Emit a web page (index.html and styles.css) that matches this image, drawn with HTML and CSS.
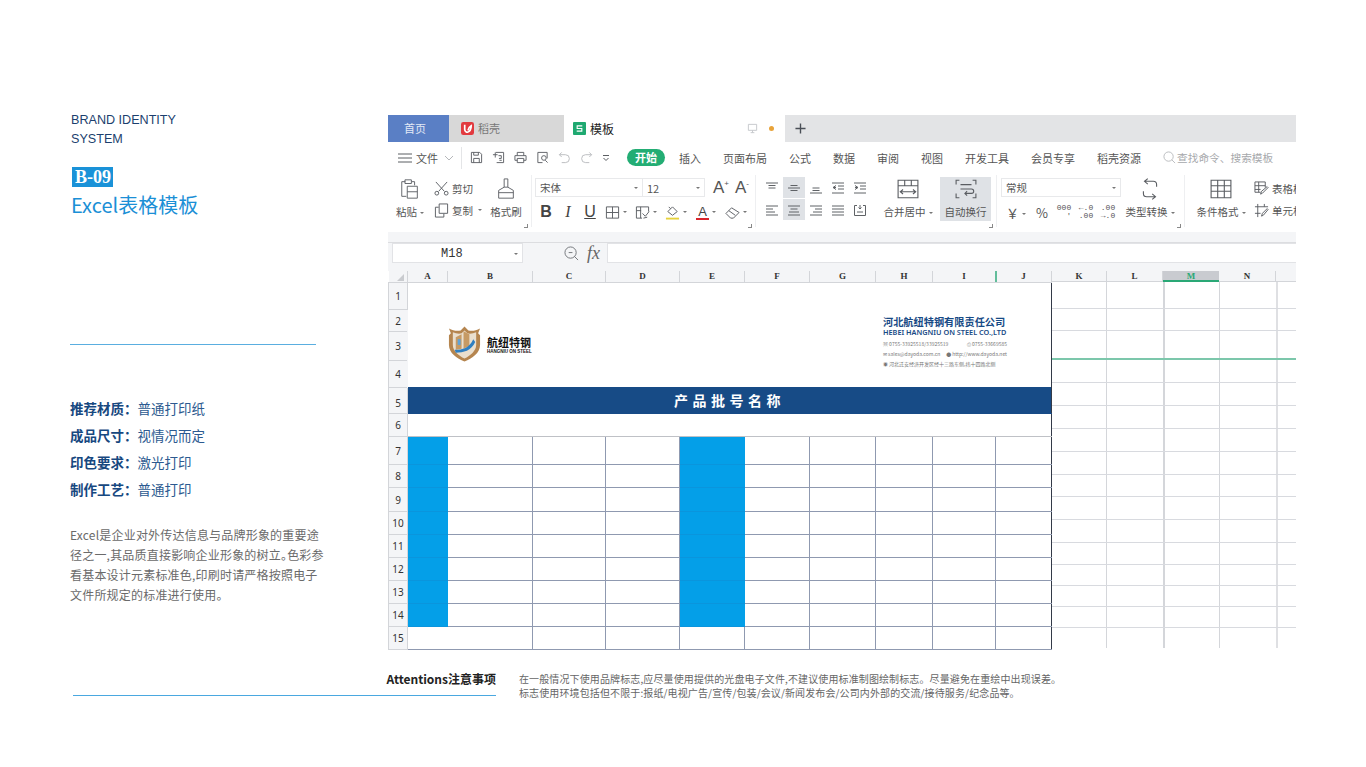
FILE: index.html
```html
<!DOCTYPE html>
<html lang="zh-CN">
<head>
    <meta charset="UTF-8">
    <meta name="viewport" content="width=device-width, initial-scale=1.0">
    <title>Excel表格模板</title>
    <link rel="stylesheet" href="styles.css">
</head>
<body>
    <div class="page">
        <div class="top">
            <aside class="side">
                <div class="brand">BRAND IDENTITY<br>SYSTEM</div>
                <div class="badge"><span>B-09</span></div>
                <h1 class="side-title">Excel表格模板</h1>
                <div class="side-rule"></div>
                <ul class="specs">
                    <li><b>推荐材质：</b>普通打印纸</li>
                    <li><b>成品尺寸：</b>视情况而定</li>
                    <li><b>印色要求：</b>激光打印</li>
                    <li><b>制作工艺：</b>普通打印</li>
                </ul>
                <p class="side-text">Excel是企业对外传达信息与品牌形象的重要途径之一,其品质直接影响企业形象的树立。色彩参看基本设计元素标准色,印刷时请严格按照电子文件所规定的标准进行使用。</p>
            </aside>

            <main class="app">
                <div class="tabs">
                    <div class="tab tab-home">首页</div>
                    <div class="tab tab-doc">
                        <svg class="tab-icon" viewBox="0 0 14 14"><rect width="14" height="14" rx="2.5" fill="#e23a3f"/><path d="M4 3v5c0 2 2 3 3 3 3-1 4-4 4-7-2 1-3 3-3.500 5" fill="none" stroke="#fff" stroke-width="1.800"/></svg>
                        稻壳
                    </div>
                    <div class="tab tab-active">
                        <svg class="tab-icon" viewBox="0 0 14 14"><rect width="14" height="14" rx="1" fill="#1fa971"/><path d="M10 4.200H4.500v2.800h5v2.800H4" fill="none" stroke="#fff" stroke-width="1.200"/></svg>
                        模板
                        <svg class="monitor" viewBox="0 0 12 12"><path d="M1.500 1.500h9v6.500h-9zM6 8v2.500M4 10.500h4" fill="none" stroke="#c4c6ca"/></svg>
                        <span class="dot"></span>
                    </div>
                    <div class="tab-rest">
                        <svg class="plus" viewBox="0 0 12 12"><path d="M6 .5v11M.5 6h11" stroke="#4a4f57" stroke-width="1.500"/></svg>
                    </div>
                </div>

                <div class="menu">
                    <svg class="mi hamburger" viewBox="0 0 14 10"><path d="M0 1h14M0 5h14M0 9h14"/></svg>
                    <span class="file-menu">文件</span>
                    <svg class="mi chev" viewBox="0 0 10 6"><path d="M1 1l4 4 4-4"/></svg>
                    <span class="menu-sep"></span>
                    <div class="quick">
                        <svg class="mi" viewBox="0 0 14 14"><path d="M1.500 1.500h9l2 2v9h-11zM4 12.500V8h6v4.500M4 1.500v3h5v-3"/></svg>
                        <svg class="mi" viewBox="0 0 14 14"><path d="M4 1.500h8.500v11H5M1 4h5M3.500 1.500V7M7 5h3v3H7.500M8 10h2.500"/></svg>
                        <svg class="mi" viewBox="0 0 14 14"><path d="M3.500 5V1.500h7V5M3.500 10H1V5h12v5h-2.500M3.500 8h7v4.500h-7z"/></svg>
                        <svg class="mi" viewBox="0 0 14 14"><path d="M12 8V1.500H2v11h5M6 7.500a2.500 2.500 0 1 0 5 0 2.500 2.500 0 1 0-5 0M10 10l2.500 2.500"/></svg>
                        <svg class="mi faded" viewBox="0 0 14 14"><path d="M4 1.500L1.500 4 4 6.500M1.500 4H8a4 4 0 0 1 0 8.500H4"/></svg>
                        <svg class="mi faded" viewBox="0 0 14 14"><path d="M10 1.500L12.500 4 10 6.500M12.500 4H6a4 4 0 0 0 0 8.500h4"/></svg>
                        <svg class="mi small" viewBox="0 0 8 8"><path d="M1 1.500h6M1.500 4L4 6.500 6.500 4"/></svg>
                    </div>
                    <span class="pill">开始</span>
                    <nav class="menu-items">
                        <span>插入</span><span>页面布局</span><span>公式</span><span>数据</span><span>审阅</span><span>视图</span><span>开发工具</span><span>会员专享</span><span>稻壳资源</span>
                    </nav>
                    <div class="search">
                        <svg class="mi faded" viewBox="0 0 14 14"><path d="M1 6a5 5 0 1 0 10 0 5 5 0 1 0-10 0M9.500 9.500L13 13"/></svg>
                        查找命令、搜索模板
                    </div>
                </div>

                <div class="ribbon">
                    <section class="group group-clip">
                        <div class="big paste">
                            <svg class="ic-big" viewBox="0 0 22 24"><path d="M6 4H2v16h5M5.500 2h7v4h-7zM13 4h3v4M8 9h11v13H8zM8 15h11"/></svg>
                            <span class="lbl">粘贴<i class="caret"></i></span>
                        </div>
                        <div class="pair">
                            <div class="line"><svg class="ic" viewBox="0 0 16 16"><path d="M2 1l9 10M14 1L5 11M1 13a2 2 0 1 0 4 0 2 2 0 1 0-4 0M11 13a2 2 0 1 0 4 0 2 2 0 1 0-4 0"/></svg>剪切</div>
                            <div class="line"><svg class="ic" viewBox="0 0 16 16"><path d="M5.500 1h9v10h-9zM5 4.500H1.500V15h9v-3.500"/></svg>复制<i class="caret"></i></div>
                        </div>
                        <div class="big brush">
                            <svg class="ic-big" viewBox="0 0 20 24"><path d="M8 1h4v9H8zM8 10L2 13.500V22h16v-8.500L12 10M2 16h16"/></svg>
                            <span class="lbl">格式刷</span>
                        </div>
                        <i class="launch"></i>
                    </section>

                    <section class="group group-font">
                        <div class="row-one">
                            <div class="select font-name">宋体<i class="caret"></i></div>
                            <div class="select font-size">12<i class="caret"></i></div>
                            <span class="grow-font">A<sup>+</sup></span>
                            <span class="grow-font">A<sup>-</sup></span>
                        </div>
                        <div class="row-two">
                            <span class="t22 glyph bold">B</span>
                            <span class="t22 glyph ital">I</span>
                            <span class="t22 glyph under">U</span>
                            <span class="t30"><svg class="ic" viewBox="0 0 16 16"><path d="M1.500 2h13v12h-13zM8 2v12M1.500 8h13"/></svg><i class="caret"></i></span>
                            <span class="t30"><svg class="ic" viewBox="0 0 16 16"><path d="M1.500 2h13v5M1.500 2v12h6M1.500 6h5M6 2v12M8 9l3 3 4-5M9 14l4-1"/></svg><i class="caret"></i></span>
                            <span class="t30"><svg class="ic" viewBox="0 0 16 16"><path d="M3 7l5-5 5 5-5 4zM6 4l-2-2"/><path class="bar-yellow" d="M1 14.500h14"/></svg><i class="caret"></i></span>
                            <span class="t30"><span class="glyph-a">A</span><i class="caret"></i></span>
                            <span class="t30"><svg class="ic" viewBox="0 0 16 16"><path d="M1 9l6-6 8 5-6 6H6zM4 6l7 5"/></svg><i class="caret"></i></span>
                        </div>
                        <i class="launch"></i>
                    </section>

                    <section class="group group-align">
                        <div class="align-grid">
                            <span class="al"><svg class="ic-sm" viewBox="0 0 12 12"><path d="M0 1h12M2.500 3.500h7M2.500 6h7"/></svg></span>
                            <span class="al on"><svg class="ic-sm" viewBox="0 0 12 12"><path d="M2.500 3.500h7M0 6h12M2.500 8.500h7"/></svg></span>
                            <span class="al"><svg class="ic-sm" viewBox="0 0 12 12"><path d="M2.500 6h7M2.500 8.500h7M0 11h12"/></svg></span>
                            <span class="al"><svg class="ic-sm" viewBox="0 0 12 12"><path d="M0 1h12M6 4h6M6 7h6M0 11h12M4 3.500L1 5.500l3 2M1 5.500h3"/></svg></span>
                            <span class="al"><svg class="ic-sm" viewBox="0 0 12 12"><path d="M0 1h12M6 4h6M6 7h6M0 11h12M1 3.500l3 2-3 2M1 5.500h3"/></svg></span>
                            <span class="al"><svg class="ic-sm" viewBox="0 0 12 12"><path d="M0 2h12M0 5h7M0 8h9M0 11h12"/></svg></span>
                            <span class="al on"><svg class="ic-sm" viewBox="0 0 12 12"><path d="M0 2h12M2.500 5h7M1 8h10M0 11h12"/></svg></span>
                            <span class="al"><svg class="ic-sm" viewBox="0 0 12 12"><path d="M0 2h12M5 5h7M3 8h9M0 11h12"/></svg></span>
                            <span class="al"><svg class="ic-sm" viewBox="0 0 12 12"><path d="M0 2h12M0 5h12M0 8h12M0 11h12"/></svg></span>
                            <span class="al"><svg class="ic-sm" viewBox="0 0 12 12"><path d="M.5 1.500v10h11v-10M.5 1.500h2.500M9 1.500h2.500M6 1v4M4.500 3.500L6 5l1.500-1.500M3 8h6"/></svg></span>
                        </div>
                        <div class="big merge">
                            <svg class="ic-big" viewBox="0 0 20 18"><path d="M1 1h18v16H1zM1 6h18M7 1v5M13 1v5M3 11.500h14M5.500 9.500L3 11.500l2.500 2M14.500 9.500l2.500 2-2.500 2"/></svg>
                            <span class="lbl">合并居中<i class="caret"></i></span>
                        </div>
                        <div class="big wrap on">
                            <svg class="ic-big" viewBox="0 0 20 18"><path d="M4 1H1v4M16 1h3v4M4 17H1v-4M16 17h3v-4M5 5h10M5 9h10a2 2 0 0 1 0 4H9M11 11l-2 2 2 2"/></svg>
                            <span class="lbl">自动换行</span>
                        </div>
                        <i class="launch"></i>
                    </section>

                    <section class="group group-num">
                        <div class="num-fields">
                            <div class="select num-type">常规<i class="caret"></i></div>
                            <div class="row-two num-row">
                                <span class="yen">￥<i class="caret"></i></span>
                                <span class="numsym pct">%</span>
                                <span class="numsym stack">000<br>&nbsp;&nbsp;'</span>
                                <span class="numsym stack">←.0<br>.00</span>
                                <span class="numsym stack">.00<br>→.0</span>
                            </div>
                        </div>
                        <div class="big convert">
                            <svg class="ic-big" viewBox="0 0 16 20"><path d="M3 3h8c2 0 3 1 3 3v2M6 .5L3 3l3 2.500M13 17H5c-2 0-3-1-3-3v-2M10 14.500l3 2.500-3 2.500"/></svg>
                            <span class="lbl">类型转换<i class="caret"></i></span>
                        </div>
                        <i class="launch"></i>
                    </section>

                    <section class="group group-style">
                        <div class="big cond">
                            <svg class="ic-big" viewBox="0 0 20 18"><path d="M1 1h18v16H1zM1 6h18M1 11h18M7 1v16M13 1v16"/></svg>
                            <span class="lbl">条件格式<i class="caret"></i></span>
                        </div>
                        <div class="pair pair-clip">
                            <div class="line"><svg class="ic" viewBox="0 0 16 16"><path d="M1 1h11v6M1 1v11h6M1 5h11M1 9h6M5 1v11M7 14l1-3 6-5 1 1-6 6z"/></svg>表格样式</div>
                            <div class="line"><svg class="ic" viewBox="0 0 16 16"><path d="M1 4h14M1 11h6M4 1v14M11 1v3M8 14l1-3 5-5 1 1-5 6z"/></svg>单元格样式</div>
                        </div>
                    </section>
                </div>

                <div class="formula-strip"></div>
                <div class="formula">
                    <div class="name-box">M18<i class="caret"></i></div>
                    <svg class="zoom-ic" viewBox="0 0 16 16"><path d="M1 7a6 6 0 1 0 12 0 6 6 0 1 0-12 0M11 11l4 4M5 7h4"/></svg>
                    <span class="fx">fx</span>
                    <div class="formula-input"></div>
                </div>

                <div class="sheet-wrap">
                    <table class="sheet">
                        <colgroup>
                            <col class="c-head"><col class="c-a"><col class="c-b"><col class="c-c"><col class="c-d"><col class="c-e"><col class="c-f"><col class="c-g"><col class="c-h"><col class="c-i"><col class="c-j">
                        </colgroup>
                        <tr class="r-cols"><th class="corner"></th><th>A</th><th>B</th><th>C</th><th>D</th><th>E</th><th>F</th><th>G</th><th>H</th><th>I</th><th>J</th></tr>
                        <tr class="r1">
                            <th>1</th>
                            <td colspan="10" rowspan="4" class="letterhead-cell">
                                <div class="letterhead">
                                    <div class="logo">
                                        <svg class="shield" viewBox="0 0 36 38">
                                            <path d="M18 1l4 4c4 1 8 0 12-2l-2 5 2 2v10c0 8-8 14-16 17C10 34 2 28 2 20V10l2-2-2-5c4 2 8 3 12 2z" fill="#b5854f"/>
                                            <path d="M18 5l3 3c3 1 6 0 9-1v13c0 6-6 11-12 14C12 31 6 26 6 20V7c3 1 6 2 9 1z" fill="#eadfce"/>
                                            <path d="M9 12l6-3v15l-6 1zM17 6l6 3v12l-6 3z" fill="#c69a64"/>
                                            <path d="M8 25c8 0 15-2 19-11l2 3c-4 9-12 11-20 11z" fill="#2f7fc1"/>
                                            <path d="M11 14h3v6h-3z" fill="#5fa3d8"/>
                                        </svg>
                                        <div class="logo-text"><strong>航纽特钢</strong><span>HANGNIU ON STEEL</span></div>
                                    </div>
                                    <div class="company">
                                        <strong>河北航纽特钢有限责任公司</strong>
                                        <em>HEBEI HANGNIU ON STEEL CO.,LTD</em>
                                        <p class="contact-pair"><span>☏ 0755-33925518/33925519</span><span>⎙ 0755-33669585</span></p>
                                        <p class="contact-pair"><span>✉ sales@dayoda.com.cn</span><span>● http://www.dayoda.net</span></p>
                                        <p>◉ 河北迁安经济开发区经十三路东侧,纬十四路北侧</p>
                                    </div>
                                </div>
                            </td>
                        </tr>
                        <tr class="r2"><th>2</th></tr>
                        <tr class="r3"><th>3</th></tr>
                        <tr class="r4"><th>4</th></tr>
                        <tr class="r5"><th>5</th><td colspan="10" class="band">产品批号名称</td></tr>
                        <tr class="r6"><th>6</th><td colspan="10" class="blank"></td></tr>
                        <tr class="r7"><th>7</th><td class="blue"></td><td></td><td></td><td></td><td class="blue"></td><td></td><td></td><td></td><td></td><td></td></tr>
                        <tr class="r8"><th>8</th><td class="blue"></td><td></td><td></td><td></td><td class="blue"></td><td></td><td></td><td></td><td></td><td></td></tr>
                        <tr class="r9"><th>9</th><td class="blue"></td><td></td><td></td><td></td><td class="blue"></td><td></td><td></td><td></td><td></td><td></td></tr>
                        <tr class="r10"><th>10</th><td class="blue"></td><td></td><td></td><td></td><td class="blue"></td><td></td><td></td><td></td><td></td><td></td></tr>
                        <tr class="r11"><th>11</th><td class="blue"></td><td></td><td></td><td></td><td class="blue"></td><td></td><td></td><td></td><td></td><td></td></tr>
                        <tr class="r12"><th>12</th><td class="blue"></td><td></td><td></td><td></td><td class="blue"></td><td></td><td></td><td></td><td></td><td></td></tr>
                        <tr class="r13"><th>13</th><td class="blue"></td><td></td><td></td><td></td><td class="blue"></td><td></td><td></td><td></td><td></td><td></td></tr>
                        <tr class="r14"><th>14</th><td class="blue"></td><td></td><td></td><td></td><td class="blue"></td><td></td><td></td><td></td><td></td><td></td></tr>
                        <tr class="r15"><th>15</th><td colspan="2"></td><td></td><td></td><td></td><td></td><td></td><td></td><td></td><td></td></tr>
                    </table>

                    <div class="extra">
                        <div class="extra-cols"><span class="x-k">K</span><span class="x-l">L</span><span class="x-m">M</span><span class="x-n">N</span><span class="x-o"></span></div>
                        <div class="extra-rows">
                            <div class="x1"></div><div class="x2"></div><div class="x3"></div>
                            <div class="x5"></div><div class="x5"></div><div class="x5"></div><div class="x5"></div><div class="x5"></div>
                            <div class="x2"></div><div class="x5"></div><div class="x5"></div><div class="x2"></div>
                            <div class="x6"></div><div class="x6"></div><div class="x6"></div><div class="x7"></div>
                        </div>
                    </div>
                    <i class="j-mark"></i>
                </div>
            </main>
        </div>

        <footer class="foot">
            <div class="foot-title">Attentions注意事项</div>
            <div class="foot-text">
                在一般情况下使用品牌标志,应尽量使用提供的光盘电子文件,不建议使用标准制图绘制标志。尽量避免在重绘中出现误差。<br>
                标志使用环境包括但不限于:报纸/电视广告/宣传/包装/会议/新闻发布会/公司内外部的交流/接待服务/纪念品等。
            </div>
        </footer>
    </div>
</body>
</html>
```
FILE: styles.css
```css
* {
    box-sizing: border-box;
}
body {
    margin: 0;
    width: 1366px;
    height: 767px;
    overflow: hidden;
    background-color: #ffffff;
    font-family: "Noto Sans CJK SC", "Noto Sans", sans-serif;
    color: #444;
}
.page {
    padding-top: 110px;
}
.top {
    display: flex;
    padding-left: 70px;
}

/* left column */
.side {
    width: 318px;
    flex: none;
}
.brand {
    margin-top: 1px;
    padding-left: 1px;
    font-family: "Liberation Sans", Arial, sans-serif;
    font-size: 12.600px;
    line-height: 19px;
    color: #1c3f6e;
}
.badge {
    width: 41px;
    height: 20px;
    margin: 18px 0 0 2px;
    background-color: #1a92d8;
    color: #fff;
    font-family: "Liberation Serif", serif;
    font-weight: bold;
    font-size: 19px;
    line-height: 20px;
    text-align: center;
    overflow: hidden;
}
.badge span {
    display: inline-block;
    transform: scaleX(.95);
}
.side-title {
    margin: 3px 0 0 1px;
    font-size: 20px;
    font-weight: normal;
    line-height: 30px;
    color: #1b8fd6;
}
.side-rule {
    width: 246px;
    height: 1px;
    margin-top: 124px;
    background-color: #5aaee0;
}
.specs {
    list-style: none;
    margin: 50px 0 0;
    padding: 0;
    font-size: 13.500px;
    line-height: 27px;
    color: #2c5a90;
}
.specs b {
    color: #174880;
}
.side-text {
    width: 256px;
    margin: 22px 0 0;
    font-size: 12px;
    line-height: 20px;
    letter-spacing: .2px;
    font-feature-settings: "palt";
    color: #6a6a6a;
}

/* spreadsheet window */
.app {
    width: 908px;
    margin-top: 5px;
    flex: none;
    overflow: hidden;
    font-size: 10.500px;
    color: #555;
}
.tabs {
    display: flex;
    height: 27px;
    font-size: 11px;
    line-height: 27px;
}
.tab {
    display: flex;
    align-items: center;
}
.tab-home {
    width: 61px;
    padding-left: 16px;
    background-color: #5a7fc5;
    color: #e3e9f6;
}
.tab-doc {
    width: 115px;
    padding-left: 12px;
    background-color: #d8d8d8;
    color: #777;
}
.tab-active {
    width: 221px;
    padding-left: 9px;
    font-size: 12px;
    color: #222;
}
.tab-icon {
    width: 13px;
    height: 13px;
    margin-right: 4px;
}
.monitor {
    width: 11px;
    height: 11px;
    margin-left: 133px;
}
.dot {
    width: 5px;
    height: 5px;
    margin-left: 11px;
    border-radius: 50%;
    background-color: #e8a33a;
}
.tab-rest {
    flex: 1;
    display: flex;
    align-items: center;
    padding-left: 10px;
    background-color: #e3e4e6;
}
.plus {
    width: 11px;
    height: 11px;
}

.menu {
    display: flex;
    align-items: center;
    height: 31px;
    padding-left: 10px;
    font-size: 11px;
}
.mi {
    width: 13px;
    height: 13px;
    fill: none;
    stroke: #5b5e63;
    stroke-width: 1;
}
.mi.faded {
    stroke: #b8babd;
}
.mi.small {
    width: 8px;
    height: 8px;
}
.hamburger {
    width: 14px;
    height: 10px;
}
.file-menu {
    margin-left: 4px;
}
.chev {
    width: 10px;
    height: 6px;
    margin-left: 6px;
    stroke: #b5b7ba;
}
.menu-sep {
    width: 1px;
    height: 22px;
    margin: 0 8px 0 7px;
    background-color: #e4e5e7;
}
.quick {
    display: flex;
    align-items: center;
    gap: 9px;
}
.pill {
    width: 38px;
    height: 17px;
    margin-left: 17px;
    border-radius: 9px;
    background-color: #23ad74;
    color: #fff;
    font-weight: bold;
    line-height: 17px;
    text-align: center;
}
.menu-items {
    display: flex;
    gap: 22px;
    margin-left: 14px;
}
.search {
    display: flex;
    align-items: center;
    gap: 1px;
    margin-left: 22px;
    font-size: 10.700px;
    color: #a6a8ab;
    white-space: nowrap;
}

.ribbon {
    display: flex;
    height: 59px;
    overflow: hidden;
    background-color: #fff;
}
.group {
    position: relative;
    display: flex;
    flex: none;
    height: 59px;
}
.group + .group::before {
    content: "";
    position: absolute;
    left: -2px;
    top: 2px;
    height: 52px;
    width: 1px;
    background-color: #eeeff1;
}
.launch {
    position: absolute;
    right: 5px;
    bottom: 4px;
    width: 4px;
    height: 4px;
    border-right: 1px solid #888;
    border-bottom: 1px solid #888;
}
.big {
    display: flex;
    flex-direction: column;
    align-items: center;
    justify-content: space-between;
    height: 44px;
    margin-top: 4px;
    padding: 1px 0 2px;
}
.big.on {
    background-color: #dfe2e6;
}
.lbl {
    white-space: nowrap;
    line-height: 14px;
}
.ic-big {
    width: 22px;
    height: 22px;
    fill: none;
    stroke: #5a5d62;
    stroke-width: 1;
}
.ic {
    width: 15px;
    height: 15px;
    flex: none;
    fill: none;
    stroke: #5a5d62;
    stroke-width: 1;
}
.ic-sm {
    width: 12px;
    height: 12px;
    fill: none;
    stroke: #5f6266;
    stroke-width: 1;
}
.caret {
    display: inline-block;
    width: 0;
    height: 0;
    margin-left: 3px;
    vertical-align: middle;
    border-left: 2px solid transparent;
    border-right: 2px solid transparent;
    border-top: 2px solid #777;
}

.group-clip {
    width: 145px;
}
.paste {
    width: 38px;
    margin-left: 3px;
}
.pair {
    margin: 4px 0 0 5px;
    width: 48px;
}
.line {
    display: flex;
    align-items: center;
    gap: 3px;
    height: 22px;
    white-space: nowrap;
}
.line .caret {
    margin-left: 2px;
}
.brush {
    width: 36px;
    margin-left: 6px;
}

.group-font {
    flex-direction: column;
    width: 224px;
    padding: 5px 0 0 2px;
}
.row-one {
    display: flex;
    align-items: center;
    height: 19px;
}
.select {
    display: flex;
    align-items: center;
    justify-content: space-between;
    height: 19px;
    padding: 0 4px;
    border: 1px solid #e8e9eb;
}
.font-name {
    width: 108px;
}
.font-size {
    width: 63px;
    margin-left: -1px;
    font-size: 11px;
}
.grow-font {
    width: 20px;
    margin-left: 1px;
    font-family: "Liberation Sans", sans-serif;
    font-size: 17px;
    line-height: 19px;
    text-align: center;
}
.grow-font sup {
    font-size: 8px;
    line-height: 0;
}
.font-size + .grow-font {
    margin-left: 6px;
}
.row-two {
    display: flex;
    align-items: center;
    height: 22px;
    margin-top: 4px;
}
.t22 {
    width: 22px;
    text-align: center;
}
.t30 {
    display: flex;
    align-items: center;
    justify-content: center;
    width: 30px;
}
.glyph {
    font-family: "Liberation Sans", sans-serif;
    font-size: 16px;
    color: #444;
}
.bold {
    font-weight: bold;
}
.ital {
    font-style: italic;
    font-family: "Liberation Serif", serif;
}
.under {
    text-decoration: underline;
    font-weight: normal;
}
.bar-yellow {
    stroke: #e6d23c;
    stroke-width: 2;
}
.glyph-a {
    display: block;
    width: 13px;
    border-bottom: 2px solid #d9252c;
    font-family: "Liberation Sans", sans-serif;
    font-size: 13px;
    line-height: 13px;
    text-align: center;
    color: #444;
}

.group-align {
    width: 241px;
    padding-left: 4px;
}
.align-grid {
    display: grid;
    grid-template-columns: repeat(5, 22px);
    grid-auto-rows: 21px;
    row-gap: 1px;
    margin-top: 4px;
    height: 43px;
}
.al {
    display: flex;
    align-items: center;
    justify-content: center;
}
.al.on {
    background-color: #dfe2e6;
}
.merge {
    width: 50px;
    margin-left: 12px;
}
.wrap {
    width: 51px;
    margin-left: 7px;
}

.group-num {
    width: 188px;
    padding-left: 3px;
}
.num-fields {
    width: 124px;
    padding-top: 5px;
}
.num-type {
    width: 120px;
}
.num-row {
    gap: 0;
}
.yen {
    width: 30px;
    font-size: 13px;
    text-align: center;
}
.numsym {
    width: 22px;
    text-align: center;
    color: #555;
}
.pct {
    font-size: 13px;
}
.stack {
    font-family: "Liberation Mono", monospace;
    font-size: 8px;
    line-height: 8px;
}
.convert {
    width: 50px;
}

.group-style {
    flex: 1;
    padding-left: 10px;
}
.cond {
    width: 50px;
}
.pair-clip {
    margin-left: 8px;
    width: 100px;
}

.formula-strip {
    height: 11px;
    background-color: #f4f5f7;
    border-bottom: 1px solid #dcdde0;
}
.formula {
    display: flex;
    align-items: center;
    height: 28px;
    padding: 0 0 8px 4px;
    background-color: #f4f5f7;
}
.name-box {
    display: flex;
    align-items: center;
    width: 131px;
    height: 20px;
    padding: 2px 4px 0 48px;
    justify-content: space-between;
    background-color: #fff;
    border: 1px solid #e2e3e6;
    font-family: "Liberation Mono", monospace;
    font-size: 12px;
    color: #333;
}
.zoom-ic {
    width: 15px;
    height: 15px;
    margin-left: 41px;
    fill: none;
    stroke: #707377;
    stroke-width: 1;
}
.fx {
    margin-left: 8px;
    font-family: "Liberation Serif", serif;
    font-style: italic;
    font-size: 18px;
    color: #666;
}
.formula-input {
    flex: 1;
    height: 20px;
    margin-left: 7px;
    background-color: #fff;
    border: 1px solid #e2e3e6;
    border-right: 0;
}

/* grid */
.sheet-wrap {
    position: relative;
    display: flex;
    align-items: flex-start;
}
.sheet {
    width: 663px;
    flex: none;
    table-layout: fixed;
    border-collapse: collapse;
}
.c-head { width: 19px; }
.c-a { width: 40px; }
.c-b { width: 85px; }
.c-c { width: 73px; }
.c-d { width: 74px; }
.c-e { width: 65px; }
.c-f { width: 65px; }
.c-g { width: 66px; }
.c-h { width: 57px; }
.c-i { width: 63px; }
.c-j { width: 56px; }
.sheet th {
    padding: 1px 0 0;
    background-color: #f4f5f7;
    border: 1px solid #d3d5d9;
    font-family: "Noto Sans", sans-serif;
    font-size: 10px;
    font-weight: normal;
    color: #333;
}
.sheet td {
    padding: 0;
    border: 1px solid #8f99b0;
}
.sheet td:last-child {
    border-right: 1px solid #333a48;
}
.sheet .r-cols th {
    height: 11px;
    padding: 0;
    border-width: 0 1px 1px 0;
    font-family: "Liberation Serif", serif;
    font-size: 9px;
    font-weight: bold;
    line-height: 10px;
}
.sheet .r5 th {
    padding-top: 5px;
}
.corner {
    position: relative;
}
.corner::after {
    content: "";
    position: absolute;
    right: 3px;
    bottom: 1px;
    border-left: 7px solid transparent;
    border-bottom: 7px solid #c9cbcf;
}
.r1 { height: 27px; }
.r2 { height: 22px; }
.r3 { height: 29px; }
.r4 { height: 27px; }
.r5 { height: 26px; }
.r6 { height: 23px; }
.r7 { height: 28px; }
.r8 { height: 23px; }
.r9 { height: 24px; }
.r10, .r11, .r12, .r13, .r14, .r15 { height: 23px; }
.sheet .letterhead-cell {
    background-color: #fff;
    border-color: transparent #333a48 transparent transparent;
    vertical-align: top;
}
.letterhead {
    display: flex;
    justify-content: space-between;
    height: 104px;
    padding: 33px 44px 0 39px;
}
.logo {
    display: flex;
    align-items: flex-start;
    margin-top: 9px;
}
.shield {
    width: 35px;
    height: 38px;
}
.logo-text {
    display: flex;
    flex-direction: column;
    margin: 11px 0 0 5px;
    color: #111;
}
.logo-text strong {
    font-size: 11px;
    line-height: 13px;
}
.logo-text span {
    font-family: "Liberation Sans", sans-serif;
    font-size: 4.500px;
    font-weight: bold;
    line-height: 6px;
    white-space: nowrap;
}
.company {
    width: 124px;
    color: #777;
    font-size: 5px;
    line-height: 10px;
}
.company strong {
    display: block;
    font-size: 10.200px;
    line-height: 12px;
    color: #174a85;
    white-space: nowrap;
}
.company em {
    display: block;
    margin-bottom: 3px;
    font-family: "Noto Sans", sans-serif;
    font-size: 7.300px;
    font-weight: 600;
    font-style: normal;
    line-height: 8px;
    color: #174a85;
    white-space: nowrap;
}
.company p {
    margin: 0;
    white-space: nowrap;
}
.contact-pair {
    display: flex;
    justify-content: space-between;
}
.sheet .band {
    background-color: #174b86;
    border-color: #174b86 #333a48 #174b86 #174b86;
    color: #fff;
    font-size: 14px;
    font-weight: bold;
    letter-spacing: 4.500px;
    text-align: center;
    line-height: 24px;
}
.sheet .blank {
    background-color: #fff;
    border-color: #174b86 #333a48 #bfc1c6 transparent;
}
.sheet .blue {
    background-color: #049fe8;
    border-color: #0a95dd #049fe8;
}

.extra {
    width: 245px;
    flex: none;
}
.extra-cols {
    display: flex;
    height: 11px;
    background-color: #f4f5f7;
    border-bottom: 1px solid #d3d5d9;
    font-family: "Liberation Serif", serif;
    font-size: 9px;
    font-weight: bold;
    line-height: 10px;
    color: #333;
    text-align: center;
}
.x-k { width: 55px; border-right: 1px solid #d3d5d9; }
.x-l { width: 56px; border-right: 1px solid #d3d5d9; }
.x-m { width: 56px; height: 11px; background-color: #c9cbd0; color: #2aa876; border-bottom: 2px solid #2aa876; }
.x-n { width: 57px; border-right: 1px solid #d3d5d9; }
.x-o { width: 21px; }
.extra-rows {
    background:
        linear-gradient(#d4d6da, #d4d6da) 54px 0 / 1px 100% no-repeat,
        linear-gradient(#d4d6da, #d4d6da) 111px 0 / 2px 100% no-repeat,
        linear-gradient(#d4d6da, #d4d6da) 167px 0 / 1px 100% no-repeat,
        linear-gradient(#dfe0e3, #dfe0e3) 224px 0 / 2px 100% no-repeat;
}
.extra-rows div {
    border-bottom: 1px solid #d8dadf;
}
.extra-rows .x7 {
    border-bottom: 0;
}
.extra-rows .x3 {
    border-bottom: 2px solid #7cc7ab;
}
.x1 { height: 27px; }
.x2 { height: 22px; }
.x3 { height: 29px; }
.x5 { height: 23px; }
.x6 { height: 21px; }
.x7 { height: 20px; }
.j-mark {
    position: absolute;
    left: 607px;
    top: 0;
    width: 2px;
    height: 11px;
    background-color: #62bd9b;
}

/* bottom notes */
.foot {
    display: flex;
    margin: 19px 0 0 73px;
}
.foot-title {
    width: 423px;
    height: 27px;
    flex: none;
    border-bottom: 1px solid #4aa8e0;
    font-size: 12px;
    font-weight: bold;
    line-height: 20px;
    color: #222;
    text-align: right;
}
.foot-text {
    margin-left: 23px;
    padding-top: 3px;
    font-size: 10px;
    line-height: 14px;
    letter-spacing: .12px;
    color: #666;
    white-space: nowrap;
}
```
